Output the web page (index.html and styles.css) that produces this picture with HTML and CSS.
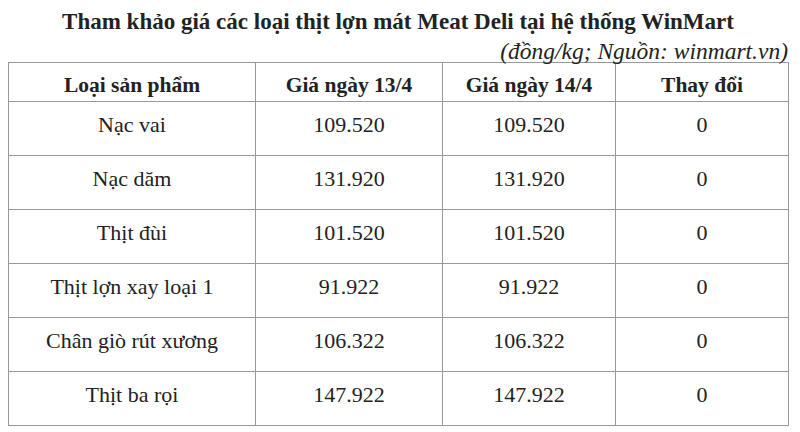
FILE: index.html
```html
<!DOCTYPE html>
<html lang="vi">
<head>
<meta charset="utf-8">
<link rel="stylesheet" href="styles.css">
</head>
<body>
<div class="wrap">
  <h1 class="title">Tham khảo giá các loại thịt lợn mát Meat Deli tại hệ thống WinMart</h1>
  <p class="note">(đồng/kg; Nguồn: winmart.vn)</p>
  <table class="prices">
    <colgroup>
      <col class="c1"><col class="c2"><col class="c3"><col class="c4">
    </colgroup>
    <thead>
      <tr><th>Loại sản phẩm</th><th>Giá ngày 13/4</th><th>Giá ngày 14/4</th><th>Thay đổi</th></tr>
    </thead>
    <tbody>
      <tr><td>Nạc vai</td><td>109.520</td><td>109.520</td><td>0</td></tr>
      <tr><td>Nạc dăm</td><td>131.920</td><td>131.920</td><td>0</td></tr>
      <tr><td>Thịt đùi</td><td>101.520</td><td>101.520</td><td>0</td></tr>
      <tr><td>Thịt lợn xay loại 1</td><td>91.922</td><td>91.922</td><td>0</td></tr>
      <tr><td>Chân giò rút xương</td><td>106.322</td><td>106.322</td><td>0</td></tr>
      <tr><td>Thịt ba rọi</td><td>147.922</td><td>147.922</td><td>0</td></tr>
    </tbody>
  </table>
</div>
</body>
</html>
```
FILE: styles.css
```css
html, body {
  margin: 0;
  padding: 0;
  background: #ffffff;
}
body {
  font-family: "Liberation Serif", "Times New Roman", serif;
  color: #222222;
}
.wrap {
  width: 800px;
  height: 432px;
  padding: 0 0 0 8px;
  box-sizing: border-box;
}
.title {
  margin: 0;
  padding-top: 4px;
  height: 36px;
  line-height: 36px;
  font-size: 23px;
  font-weight: bold;
  text-align: center;
  width: 780px;
  white-space: nowrap;
}
.note {
  margin: 0;
  height: 22px;
  line-height: 22px;
  font-size: 23.5px;
  font-style: italic;
  text-align: right;
  width: 780px;
}
.prices {
  border-collapse: collapse;
  width: 780px;
  table-layout: fixed;
}
.c1 { width: 247px; }
.c2 { width: 187px; }
.c3 { width: 173px; }
.c4 { width: 173px; }
.prices th,
.prices td {
  border: 1px solid #999999;
  text-align: center;
  font-size: 22px;
  line-height: 26px;
}
.prices th {
  height: 33px;
  padding: 5px 0 0;
  font-weight: bold;
  font-size: 21.5px;
}
.prices td {
  height: 46px;
  padding: 0 0 7px;
}
```
